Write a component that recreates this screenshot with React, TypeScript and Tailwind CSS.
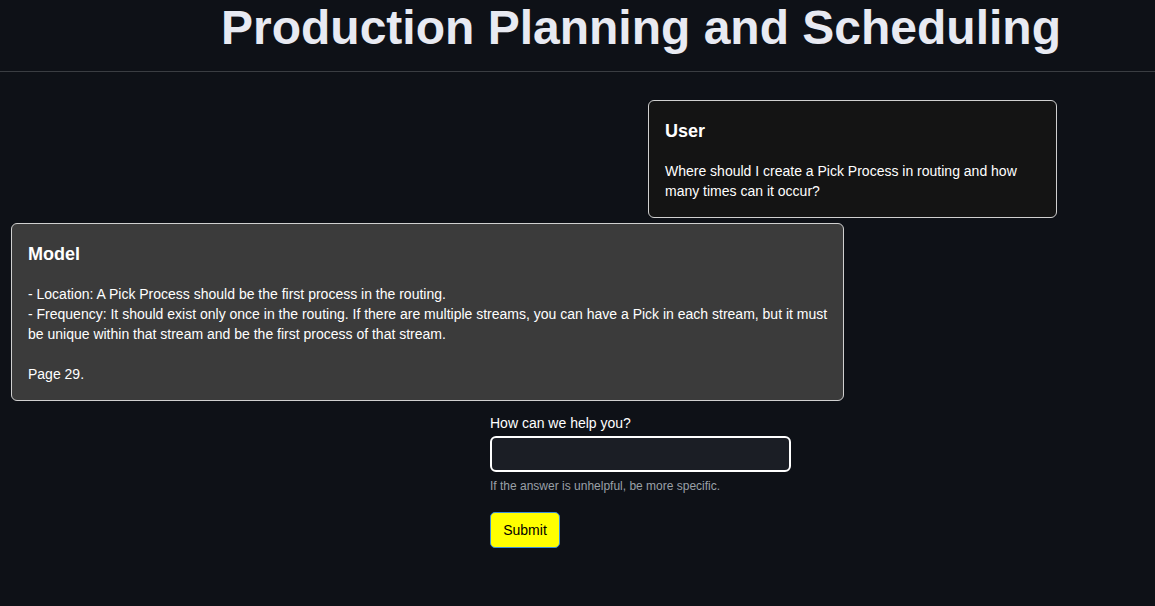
import React from "react";

const answer = [
  "- Location: A Pick Process should be the first process in the routing.",
  "- Frequency: It should exist only once in the routing. If there are multiple streams, you can have a Pick in each stream, but it must be unique within that stream and be the first process of that stream.",
];

export default function App() {
  return (
    <div
      className="min-h-screen bg-[#0e1117] text-white"
      style={{ fontFamily: '"Liberation Sans", Arial, sans-serif' }}
    >
      <header className="h-[72px] border-b border-[#3a3d42] pl-[221px] pt-[4px]">
        <h1 className="text-[48px] leading-[48px] font-bold text-[#e8eaf2] whitespace-nowrap">
          Production Planning and Scheduling
        </h1>
      </header>

      <main className="pt-[28px]">
        {/* user message */}
        <div className="ml-[648px] w-[409px] rounded-md border border-[#d0d0d0] bg-[#141414] p-4">
          <h3 className="text-lg leading-7 font-bold mb-4">User</h3>
          <p className="text-sm leading-5">
            Where should I create a Pick Process in routing and how many times can it occur?
          </p>
        </div>

        {/* model message */}
        <div className="ml-[11px] mt-[5px] w-[833px] rounded-md border border-[#d0d0d0] bg-[#3b3b3b] py-4 pl-4 pr-[12px]">
          <h3 className="text-lg leading-7 font-bold mb-4">Model</h3>
          <div className="text-sm leading-5">
            {answer.map((line) => (
              <p key={line}>{line}</p>
            ))}
            <p>&nbsp;</p>
            <p>Page 29.</p>
          </div>
        </div>

        {/* question form */}
        <form className="ml-[490px] mt-[12px] w-[301px]" onSubmit={(e) => e.preventDefault()}>
          <label className="block text-sm leading-5 mb-[3px]">How can we help you?</label>
          <input
            type="text"
            className="block w-full h-9 rounded-md border-2 border-white bg-[#1b1e25] px-2 text-sm text-white outline-none"
          />
          <p className="mt-[6px] text-xs leading-4 text-[#9aa0a8]">
            If the answer is unhelpful, be more specific.
          </p>
          <button
            type="submit"
            className="mt-[18px] h-9 w-[70px] rounded-[5px] border border-[#3b8fd8] bg-[#ffff00] text-sm text-black"
          >
            Submit
          </button>
        </form>
      </main>
    </div>
  );
}
